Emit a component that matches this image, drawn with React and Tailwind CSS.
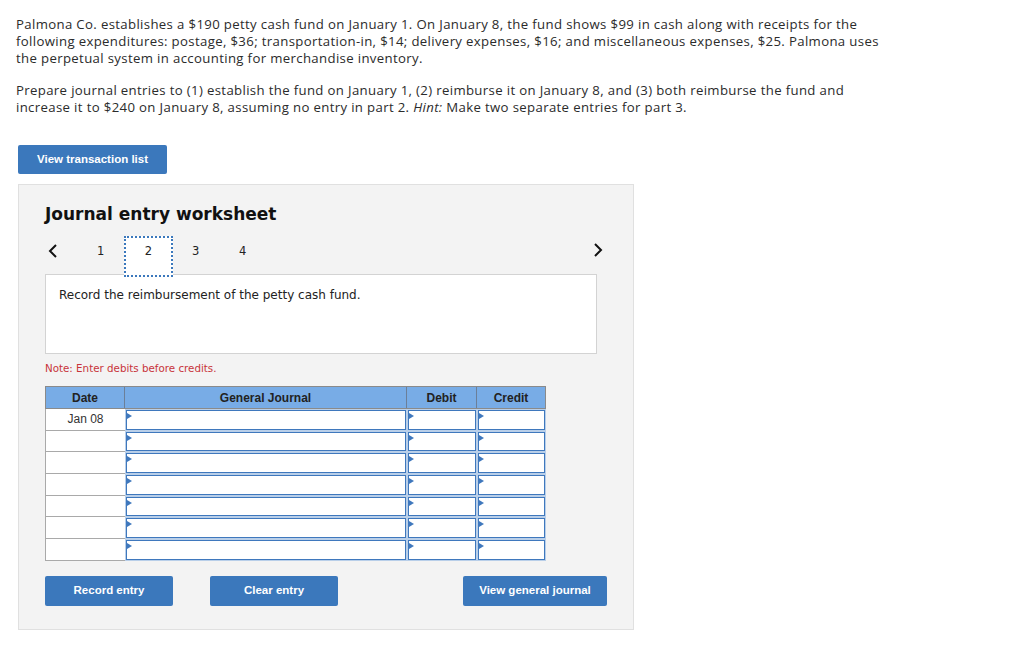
import React from "react";

const rows = ["Jan 08", "", "", "", "", "", ""];

function Cell({ w }) {
  return (
    <div className={`${w} h-full p-px bg-[#b9cfe9]`}>
      <div className="relative h-full border border-[#3f78bd] bg-white">
        <div className="absolute left-0 top-[2px] w-0 h-0 border-t-[3px] border-b-[3px] border-l-[5px] border-t-transparent border-b-transparent border-l-[#3f78bd]" />
      </div>
    </div>
  );
}

export default function App() {
  return (
    <div className="w-[1024px] h-[659px] bg-white text-[#333] relative" style={{ fontFamily: "Lato, 'Liberation Sans', sans-serif" }}>
      <div className="pl-[16px] pt-[16px] text-[13.2px] leading-[17px] tracking-[0.35px] text-[#2b2b2b] whitespace-nowrap" style={{ fontFamily: "'Open Sans', 'Liberation Sans', sans-serif" }}>
        <p>
          Palmona Co. establishes a $190 petty cash fund on January 1. On January 8, the fund shows $99 in cash along with receipts for the
          <br />
          following expenditures: postage, $36; transportation-in, $14; delivery expenses, $16; and miscellaneous expenses, $25. Palmona uses
          <br />
          the perpetual system in accounting for merchandise inventory.
        </p>
        <p className="mt-[15px]">
          Prepare journal entries to (1) establish the fund on January 1, (2) reimburse it on January 8, and (3) both reimburse the fund and
          <br />
          increase it to $240 on January 8, assuming no entry in part 2. <i>Hint:</i> Make two separate entries for part 3.
        </p>
      </div>

      <div className="ml-[18px] mt-[29px] w-[149px] h-[29px] rounded-[2px] bg-[#3b78bc] text-white text-[11.5px] font-bold flex items-center justify-center" style={{ fontFamily: "'Liberation Sans', Arial, sans-serif" }}>
        View transaction list
      </div>

      <div className="ml-[18px] mt-[10px] w-[616px] h-[446px] bg-[#f3f3f3] border border-[#e0e0e0] pl-[26px] pt-[19px]" style={{ fontFamily: "'DejaVu Sans', Verdana, sans-serif" }}>
        <div className="text-[17px] font-bold text-[#111] leading-[20px]">Journal entry worksheet</div>

        <div className="relative mt-[12px] h-[38px] w-[562px] text-[11.5px] text-[#222]">
          <svg className="absolute left-[3px] top-[8px]" width="10" height="14" viewBox="0 0 10 14">
            <path d="M8 1 L2 7 L8 13" fill="none" stroke="#111" strokeWidth="2" />
          </svg>
          <span className="absolute left-[52px] top-[7px] leading-[16px]">1</span>
          <div className="absolute left-[79px] top-0 w-[49px] h-[41px] bg-white border-2 border-dotted border-[#3b78bc] z-10 flex items-start justify-center pt-[5px] leading-[16px]">2</div>
          <span className="absolute left-[147px] top-[7px] leading-[16px]">3</span>
          <span className="absolute left-[194px] top-[7px] leading-[16px]">4</span>
          <svg className="absolute left-[548px] top-[7px]" width="10" height="14" viewBox="0 0 10 14">
            <path d="M2 1 L8 7 L2 13" fill="none" stroke="#111" strokeWidth="2" />
          </svg>
        </div>

        <div className="w-[552px] h-[80px] bg-white border border-[#d3d3d3] pl-[13px] pt-[13px] text-[12px] leading-[15px] text-[#222]">
          Record the reimbursement of the petty cash fund.
        </div>

        <div className="mt-[7px] text-[10.3px] text-[#c8343a] leading-[14px]">Note: Enter debits before credits.</div>

        <div className="mt-[11px] w-[501px]" style={{ fontFamily: "'Liberation Sans', Arial, sans-serif" }}>
          <div className="flex h-[23px] bg-[#78ace6] border border-[#8a8a8a] text-[12px] font-bold text-[#222]">
            <div className="w-[79px] flex items-center justify-center border-r border-[#6b7f99]">Date</div>
            <div className="w-[282px] flex items-center justify-center border-r border-[#6b7f99]">General Journal</div>
            <div className="w-[70px] flex items-center justify-center border-r border-[#6b7f99]">Debit</div>
            <div className="w-[68px] flex items-center justify-center">Credit</div>
          </div>
          {rows.map((d, i) => (
            <div key={i} className="flex h-[21.7px]">
              <div className="w-[80px] h-full bg-white border-l border-b border-[#a9a9a9] flex items-center justify-center text-[12px] text-[#333]">{d}</div>
              <Cell w="w-[282px]" />
              <Cell w="w-[70px]" />
              <Cell w="w-[69px]" />
            </div>
          ))}
        </div>

        <div className="mt-[15px] relative h-[30px] w-[562px] text-white text-[11.5px] font-bold" style={{ fontFamily: "'Liberation Sans', Arial, sans-serif" }}>
          <div className="absolute left-0 top-0 w-[128px] h-[30px] rounded-[2px] bg-[#3b78bc] flex items-center justify-center">Record entry</div>
          <div className="absolute left-[165px] top-0 w-[128px] h-[30px] rounded-[2px] bg-[#3b78bc] flex items-center justify-center">Clear entry</div>
          <div className="absolute left-[418px] top-0 w-[144px] h-[30px] rounded-[2px] bg-[#3b78bc] flex items-center justify-center">View general journal</div>
        </div>
      </div>
    </div>
  );
}
